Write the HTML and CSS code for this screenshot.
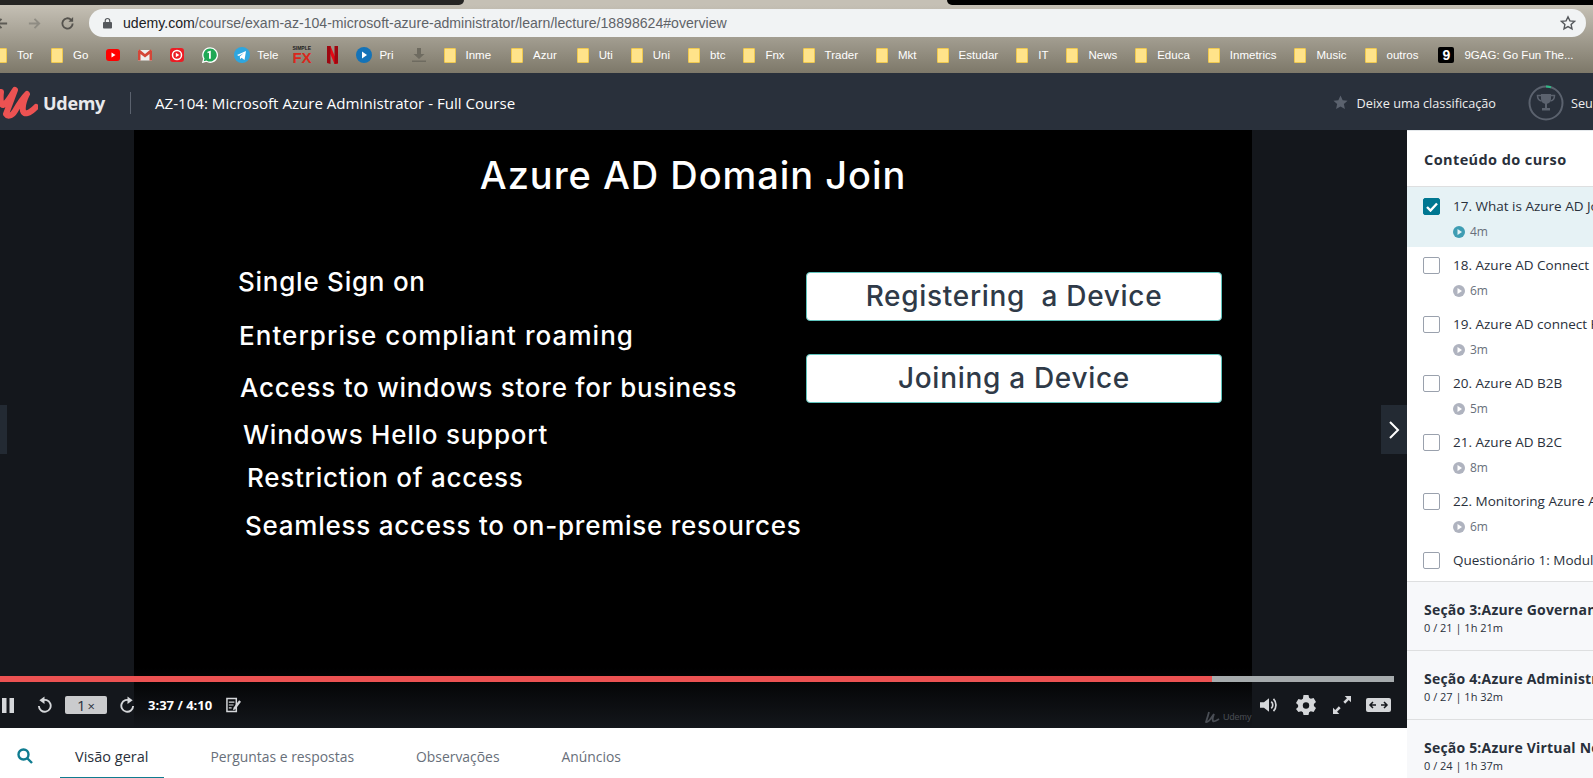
FILE: index.html
```html
<!DOCTYPE html>
<html lang="pt-BR">
<head>
<meta charset="utf-8">
<title>AZ-104: Microsoft Azure Administrator - Full Course | Udemy</title>
<link rel="stylesheet" href="styles.css">
</head>
<body>
<div class="tabstrip"><div class="tab-dark tab-left"></div><div class="tab-active"></div><div class="tab-dark tab-right"></div></div>
<div class="chrome">
  <div class="toolbar">
    <svg class="nav-ic back" viewBox="0 0 16 16"><path d="M14 8H3M8 3L3 8l5 5" fill="none" stroke="#5d5b55" stroke-width="2"/></svg>
    <svg class="nav-ic" viewBox="0 0 16 16"><path d="M2 8h11M8 3l5 5-5 5" fill="none" stroke="#8f8c83" stroke-width="2"/></svg>
    <svg class="nav-ic" viewBox="0 0 16 16"><path d="M13.5 8A5.5 5.5 0 1 1 11.8 4" fill="none" stroke="#55534e" stroke-width="2"/><path d="M14 1v5H9z" fill="#55534e"/></svg>
    <div class="omnibox">
      <svg class="lock" viewBox="0 0 10 12"><path d="M2.5 5V3.500a2.500 2.500 0 0 1 5 0V5" fill="none" stroke="#55585c" stroke-width="1.300"/><rect y="5" width="10" height="7" rx="1" fill="#55585c"/></svg>
      <span class="url"><b>udemy.com</b>/course/exam-az-104-microsoft-azure-administrator/learn/lecture/18898624#overview</span>
      <svg class="bookmark-star" viewBox="0 0 16 16"><path d="M8 1.800l1.900 4.100 4.500.5-3.300 3 .9 4.400L8 11.600l-4 2.200.9-4.400-3.300-3 4.500-.5z" fill="none" stroke="#55585c" stroke-width="1.400"/></svg>
    </div>
  </div>
  <div class="bookmarks">
    <a class="bm"><i class="folder"></i>Tor</a>
    <a class="bm"><i class="folder"></i>Go</a>
    <a class="bm"><svg class="fav" viewBox="0 0 14 14"><rect y="1" width="14" height="12" rx="3" fill="#f00"/><path d="M5.500 4.500v5L9.500 7z" fill="#fff"/></svg></a>
    <a class="bm"><svg class="fav" viewBox="0 0 14 14"><rect y="2" width="14" height="10.500" fill="#eee"/><path d="M0 2.500v10h2.500V6L7 9.500 11.500 6v6.500H14v-10L12.500 1.500 7 6 1.500 1.500z" fill="#d44638"/></svg></a>
    <a class="bm"><svg class="fav" viewBox="0 0 14 14"><rect width="14" height="14" rx="3" fill="#ec1c24"/><circle cx="7" cy="7" r="4.500" fill="none" stroke="#fff" stroke-width="1.500"/><path d="M5.800 4.800v4.400L9.300 7z" fill="#fff"/></svg></a>
    <a class="bm"><svg class="fav wide" viewBox="0 0 16 16"><path d="M8 .8a7.200 7.200 0 0 0-6.200 10.800L.8 15.200l3.700-1A7.200 7.200 0 1 0 8 .8z" fill="#1fa855" stroke="#fff" stroke-width="1.300"/><path d="M8.800 3.800v8H7V5.700l-1.500.6V4.800l3-1z" fill="#fff"/></svg></a>
    <a class="bm tele"><svg class="fav wide" viewBox="0 0 16 16"><circle cx="8" cy="8" r="8" fill="#2ea6df"/><path d="M3 8l9-4-1.500 9-3-2.300-1.400 1.500-.3-2.700 4-3.500-5 3z" fill="#fff"/></svg>Tele</a>
    <a class="bm fx-item"><span class="fx"><small>SIMPLE</small>FX</span></a>
    <a class="bm"><svg class="fav narrow" viewBox="0 0 11 18"><path d="M0 0h3.500L11 18H7.500z" fill="#e50914"/><path d="M0 0h3.500v18L0 17zM7.500 0H11v17l-3.500 1z" fill="#9d0710"/></svg></a>
    <a class="bm prime"><svg class="fav wide" viewBox="0 0 16 16"><circle cx="8" cy="8" r="8" fill="#1473b8"/><path d="M6 4.500v7L11 8z" fill="#fff"/></svg>Pri</a>
    <a class="bm"><svg class="fav" viewBox="0 0 14 14"><path d="M5 0h4v6h3.500L7 11 1.500 6H5z" fill="#6e6b60"/><rect y="12.500" width="14" height="1.500" fill="#6e6b60"/></svg></a>
    <a class="bm"><i class="folder"></i>Inme</a>
    <a class="bm nudge"><i class="folder"></i>Azur</a>
    <a class="bm nudge"><i class="folder"></i>Uti</a>
    <a class="bm"><i class="folder"></i>Uni</a>
    <a class="bm"><i class="folder"></i>btc</a>
    <a class="bm"><i class="folder"></i>Fnx</a>
    <a class="bm"><i class="folder"></i>Trader</a>
    <a class="bm"><i class="folder"></i>Mkt</a>
    <a class="bm nudge"><i class="folder"></i>Estudar</a>
    <a class="bm"><i class="folder"></i>IT</a>
    <a class="bm"><i class="folder"></i>News</a>
    <a class="bm"><i class="folder"></i>Educa</a>
    <a class="bm"><i class="folder"></i>Inmetrics</a>
    <a class="bm"><i class="folder"></i>Music</a>
    <a class="bm"><i class="folder"></i>outros</a>
    <a class="bm nudge"><span class="nine">9</span>9GAG: Go Fun The...</a>
  </div>
</div>

<header class="topbar">
  <svg class="logo" viewBox="0 0 38 34"><path d="M1 6C0 14 1 19 3 19 7 18 11 10 15 4 12 12 9 20 6 28 8 31 12 30 15 25 19 18 23 12 27 8 24 14 22 20 23 25 24 29 29 28 36 21" fill="none" stroke="#ec5252" stroke-width="6" stroke-linecap="round" stroke-linejoin="round"/></svg>
  <span class="brand">Udemy</span>
  <span class="sep"></span>
  <span class="course">AZ-104: Microsoft Azure Administrator - Full Course</span>
  <span class="rate"><svg viewBox="0 0 16 16"><path d="M8 .5l2.300 5 5.200.6-3.900 3.600 1.100 5.300L8 12.300 3.300 15l1.100-5.300L.5 6.100l5.200-.6z" fill="#5b626e"/></svg>Deixe uma classificação</span>
  <svg class="ring" viewBox="0 0 36 36"><circle cx="18" cy="18" r="16.500" fill="none" stroke="#5b626e" stroke-width="2"/><path d="M18 1.500a16.500 16.500 0 0 1 5 .8" fill="none" stroke="#2fb886" stroke-width="2"/><path d="M13 9h10v5a5 5 0 0 1-10 0z" fill="#5b626e"/><path d="M13 10.500H9.500c0 3.500 1.200 5 4 5.500M23 10.500h3.500c0 3.500-1.200 5-4 5.500" fill="none" stroke="#5b626e" stroke-width="1.500"/><path d="M17 18h2v5h3v2.500h-8V23h3z" fill="#5b626e"/></svg>
  <span class="progress-label">Seu progresso</span>
</header>

<div class="main">
  <div class="content">
    <div class="video">
      <div class="slide">
        <h1 class="slide-title">Azure AD Domain Join</h1>
        <div class="slide-body">
          <ul class="points">
            <li class="p1">Single Sign on</li>
            <li class="p2">Enterprise compliant roaming</li>
            <li class="p3">Access to windows store for business</li>
            <li class="p4">Windows Hello support</li>
            <li class="p5">Restriction of access</li>
            <li class="p6">Seamless access to on-premise resources</li>
          </ul>
          <div class="boxes">
            <div class="box">Registering&nbsp; a Device</div>
            <div class="box">Joining a Device</div>
          </div>
        </div>
      </div>
      <div class="side-nav side-prev"></div>
      <div class="side-nav side-next"><svg viewBox="0 0 12 20"><path d="M2 2l8 8-8 8" fill="none" stroke="#fff" stroke-width="2"/></svg></div>
      <div class="controls">
        <div class="bar"><div class="bar-done"></div></div>
        <div class="ctl-row">
          <svg class="ic pause" viewBox="0 0 12 15"><path d="M0 0h4.500v15H0zM7.500 0H12v15H7.500z" fill="#d5d7da"/></svg>
          <svg class="ic rew" viewBox="0 0 16 18"><path d="M5 4.500A6.300 6.300 0 1 1 2 10" fill="none" stroke="#d5d7da" stroke-width="2"/><path d="M8 0v8L2.500 4z" fill="#d5d7da"/></svg>
          <span class="speed">1<small>×</small></span>
          <svg class="ic fwd" viewBox="0 0 16 18"><path d="M11 4.500A6.300 6.300 0 1 0 14 10" fill="none" stroke="#d5d7da" stroke-width="2"/><path d="M8 0v8l5.500-4z" fill="#d5d7da"/></svg>
          <span class="time">3:37 / 4:10</span>
          <svg class="ic note" viewBox="0 0 16 16"><path d="M1 1h10v14H1z" fill="none" stroke="#d5d7da" stroke-width="1.600"/><path d="M3 5h6M3 8h5M3 11h3" stroke="#d5d7da" stroke-width="1.300"/><path d="M14 3l2 1.500-6 8-2.500 1 .5-2.500z" fill="#d5d7da"/></svg>
          <span class="ctl-right">
            <svg class="ic" viewBox="0 0 16 16"><path d="M0 5.500h3.500L8 2v12l-4.500-3.500H0z" fill="#d5d7da"/><path d="M10 5a4 4 0 0 1 0 6M12 2.500a8 8 0 0 1 0 11" fill="none" stroke="#d5d7da" stroke-width="1.500"/></svg>
            <svg class="ic gear" viewBox="0 0 20 20"><path d="M7.500 0h5l.6 2.800 1.700 1 2.800-.9 2.400 4.200-2.100 1.900v2l2.100 1.900-2.400 4.200-2.800-.9-1.700 1-.6 2.800h-5l-.6-2.800-1.700-1-2.800.9L0 13.900 2.100 12v-2L0 8.100l2.400-4.200 2.800.9 1.700-1z" fill="#d5d7da"/><circle cx="10" cy="10.500" r="3.200" fill="#14171c"/></svg>
            <svg class="ic" viewBox="0 0 20 20"><path d="M13 0h7v7l-2.500-2.500-4 4-2-2 4-4zM0 20v-7l2.500 2.500 4-4 2 2-4 4L7 20z" fill="#d5d7da"/></svg>
            <svg class="ic wide-ic" viewBox="0 0 25 14"><rect width="25" height="14" rx="2" fill="#d5d7da"/><path d="M10 7H4M7 4L4 7l3 3M15 7h6M18 4l3 3-3 3" fill="none" stroke="#14171c" stroke-width="1.500"/></svg>
          </span>
        </div>
        <div class="watermark"><svg viewBox="0 0 16 12"><path d="M5 1C4 5 3 8 2 11 5 12 7 7 10 3 9 6 8 8 9 10 10 11 12 10 15 8" fill="none" stroke="#4a4e55" stroke-width="1.800"/></svg>Udemy</div>
      </div>
    </div>
    <nav class="tabs">
      <svg class="search" viewBox="0 0 16 16"><circle cx="6.500" cy="6.500" r="5" fill="none" stroke="#0f7c90" stroke-width="2.400"/><path d="M10 10l5 5" stroke="#0f7c90" stroke-width="2.400"/></svg>
      <a class="tab on">Visão geral</a>
      <a class="tab">Perguntas e respostas</a>
      <a class="tab">Observações</a>
      <a class="tab">Anúncios</a>
    </nav>
  </div>

  <aside class="sidebar">
    <div class="side-head">Conteúdo do curso</div>
    <div class="lesson current">
      <span class="check checked"><svg viewBox="0 0 12 10"><path d="M1 5l3.500 3.500L11 1.500" fill="none" stroke="#fff" stroke-width="2.400"/></svg></span>
      <div><div class="l-title">17. What is Azure AD Join?</div><div class="l-meta"><svg viewBox="0 0 12 12"><circle cx="6" cy="6" r="6" fill="#3f9db3"/><path d="M4.500 3v6L9 6z" fill="#e6f2f5"/></svg>4m</div></div>
    </div>
    <div class="lesson">
      <span class="check"></span>
      <div><div class="l-title">18. Azure AD Connect</div><div class="l-meta"><svg viewBox="0 0 12 12"><circle cx="6" cy="6" r="6" fill="#afb3bf"/><path d="M4.500 3v6L9 6z" fill="#fff"/></svg>6m</div></div>
    </div>
    <div class="lesson">
      <span class="check"></span>
      <div><div class="l-title">19. Azure AD connect Health</div><div class="l-meta"><svg viewBox="0 0 12 12"><circle cx="6" cy="6" r="6" fill="#afb3bf"/><path d="M4.500 3v6L9 6z" fill="#fff"/></svg>3m</div></div>
    </div>
    <div class="lesson">
      <span class="check"></span>
      <div><div class="l-title">20. Azure AD B2B</div><div class="l-meta"><svg viewBox="0 0 12 12"><circle cx="6" cy="6" r="6" fill="#afb3bf"/><path d="M4.500 3v6L9 6z" fill="#fff"/></svg>5m</div></div>
    </div>
    <div class="lesson">
      <span class="check"></span>
      <div><div class="l-title">21. Azure AD B2C</div><div class="l-meta"><svg viewBox="0 0 12 12"><circle cx="6" cy="6" r="6" fill="#afb3bf"/><path d="M4.500 3v6L9 6z" fill="#fff"/></svg>8m</div></div>
    </div>
    <div class="lesson">
      <span class="check"></span>
      <div><div class="l-title">22. Monitoring Azure AD</div><div class="l-meta"><svg viewBox="0 0 12 12"><circle cx="6" cy="6" r="6" fill="#afb3bf"/><path d="M4.500 3v6L9 6z" fill="#fff"/></svg>6m</div></div>
    </div>
    <div class="lesson quiz">
      <span class="check"></span>
      <div><div class="l-title">Questionário 1: Modulo 2</div></div>
    </div>
    <div class="section"><div class="s-title">Seção 3:Azure Governance</div><div class="s-meta">0 / 21 | 1h 21m</div></div>
    <div class="section"><div class="s-title">Seção 4:Azure Administration</div><div class="s-meta">0 / 27 | 1h 32m</div></div>
    <div class="section"><div class="s-title">Seção 5:Azure Virtual Networking</div><div class="s-meta">0 / 24 | 1h 37m</div></div>
  </aside>
</div>
</body>
</html>
```

FILE: styles.css
```css
html,body{margin:0; padding:0; height:778px; overflow:hidden; background:#fff;}
body{font-family:"Open Sans","Liberation Sans",sans-serif; color:#29303b; width:1593px;}
svg{display:block; flex:none;}

/* browser chrome */
.tabstrip{display:flex; height:5px; background:#c5c0b5;}
.tab-dark{background:#111;}
.tab-left{width:464px; border-radius:0 0 6px 0; background:#262524;}
.tab-active{width:483px;}
.tab-right{flex:1; background:#000; border-radius:0 0 0 6px;}
.chrome{height:68px; background:linear-gradient(#c5c0b5,#7d7869);}
.toolbar{height:32px; padding-top:4px; box-sizing:border-box; display:flex; align-items:flex-start; }
.nav-ic{width:15px; height:15px; margin:7px 0 0 18px;}
.nav-ic.back{margin-left:-6px;}
.omnibox{flex:1; height:28px; margin-left:14px; margin-right:7px; background:#f1f3f4; border-radius:14px; display:flex; align-items:center; padding-left:14px; font-family:"Liberation Sans",sans-serif; font-size:14.1px; color:#5f6368;}
.lock{width:9px; height:12px; margin-right:11px;}
.url b{font-weight:normal; color:#202124;}
.bookmark-star{width:16px; height:16px; margin-left:auto; margin-right:10px;}
.bookmarks{height:36px; display:flex; align-items:center; gap:18px; margin-left:-5px; white-space:nowrap; font-family:"Liberation Sans",sans-serif; font-size:11.5px; color:#fff;}
.bm{display:flex; align-items:center; gap:10px;}
.bm.tele{margin-left:-2px; gap:7px;}
.bm.prime{gap:7px;}
.bm.nudge{margin-left:2px;}
.fx-item{margin-left:-4px;}
.folder{display:block; width:12px; height:15px; background:#ffe38a; border:1px solid #f0c94f; box-sizing:border-box; border-radius:1px;}
.fav{width:14px; height:14px;}
.fav.wide{width:16px; height:16px;}
.fav.narrow{width:11px; height:18px;}
.fx{display:block; width:17px; color:#d9281c; font-family:"Liberation Sans",sans-serif; font-weight:bold; font-size:15px; line-height:13px; text-align:center;}
.fx small{display:block; color:#222; font-size:5px; line-height:5px;}
.nine{display:block; width:16px; height:16px; background:#000; color:#fff; border-radius:2px; font-weight:bold; font-size:14px; line-height:16px; text-align:center;}

/* course header */
.topbar{height:57px; padding-top:2px; background:#29303b; display:flex; align-items:center; color:#fff; white-space:nowrap; overflow:hidden; box-sizing:border-box;}
.logo{width:38px; height:34px; margin-top:1px;}
.brand{margin-left:5px; font-weight:bold; font-size:18px; color:#e8e9eb; letter-spacing:-.3px;}
.sep{width:1px; height:22px; background:#5b626e; margin-left:25px;}
.course{margin-left:24px; font-size:15.1px;}
.rate{margin-left:auto; display:flex; align-items:center; gap:9px; font-size:12.7px; color:#eee;}
.rate svg{width:15px; height:15px;}
.ring{width:36px; height:36px; margin-left:32px;}
.progress-label{margin-left:7px; width:22px; font-size:12.7px; overflow:hidden; color:#eee;}

/* player */
.main{display:flex; height:648px;}
.content{width:1407px; flex:none;}
.video{position:relative; height:598px; background:#14171c; overflow:hidden;}
.slide{width:1118px; height:598px; margin-left:134px; background:#000; color:#fff; font-family:Inter,"Liberation Sans",sans-serif;}
.slide-title{margin:0; padding-top:21px; text-align:center; font-size:38px; line-height:48px; font-weight:500; letter-spacing:.95px;}
.slide-body{display:flex; justify-content:space-between; margin-top:67px; padding-left:104px; padding-right:30px;}
.points{list-style:none; margin:0; padding:0; font-size:26px; line-height:32px; font-weight:500; letter-spacing:.75px; white-space:nowrap;}
.p2{margin:22px 0 0 1px; letter-spacing:1.05px;}
.p3{margin:20px 0 0 2px;}
.p4{margin:15px 0 0 5px;}
.p5{margin:11px 0 0 9px;}
.p6{margin:16px 0 0 7px;}
.boxes{width:416px; padding-top:6px;}
.box{height:49px; margin-bottom:33px; box-sizing:border-box; background:#fff; border:1px solid #5fc4bd; border-radius:4px; color:#2f3a48; text-align:center; font-size:28px; line-height:46px; font-weight:500; letter-spacing:.7px;}
.side-nav{position:absolute; top:275px; height:49px; background:#232a33;}
.side-prev{left:0; width:7px;}
.side-next{right:0; width:26px; display:flex; align-items:center; justify-content:center;}
.side-next svg{width:12px; height:20px;}
.controls{position:absolute; left:0; right:0; bottom:0; height:60px; background:linear-gradient(rgba(20,23,28,0),#14171c);}
.bar{position:absolute; top:8px; left:0; width:1394px; height:6px; background:#a6abad;}
.bar-done{width:1212px; height:6px; background:#ec5252;}
.ctl-row{position:absolute; top:27px; left:0; right:0; height:20px; display:flex; align-items:center;}
.ic{height:18px; width:18px;}
.pause{width:12px; height:15px; margin-left:2px;}
.rew{width:15px; margin-left:23px;}
.speed{width:42px; height:18px; margin-left:13px; background:#cacbcd; border-radius:2px; color:#29303b; font-size:15px; line-height:18px; text-align:center;}
.speed small{font-size:13px; margin-left:2px;}
.fwd{width:15px; margin-left:13px;}
.time{margin-left:13px; color:#fff; font-size:13px; font-weight:bold;}
.note{width:15px; height:16px; margin-left:14px;}
.ctl-right{position:absolute; left:1260px; display:flex; align-items:center; gap:18px;}
.gear{width:20px; height:20px; margin-right:-1px;}
.wide-ic{width:25px; height:14px; margin-left:-3px;}
.watermark{position:absolute; left:1204px; top:43px; display:flex; align-items:center; gap:3px; color:#4a4e55; font-size:9px; font-family:"Liberation Sans",sans-serif;}
.watermark svg{width:16px; height:12px;}

/* tabs under video */
.tabs{height:50px; display:flex; align-items:stretch; font-size:13.9px; color:#686f7a; white-space:nowrap;}
.search{width:16px; height:16px; margin:20px 27px 0 17px;}
.tab{display:block; padding:0 15px; line-height:58px; margin-right:32px; box-sizing:border-box; height:50px;}
.tab.on{color:#29303b; border-bottom:1px solid #0f7c90; padding-right:16px; margin-right:31px; font-size:14.5px;}

/* course content sidebar */
.sidebar{flex:1; overflow:hidden; background:#fff; white-space:nowrap; border-top:1px solid #e4e8eb;}
.side-head{height:55px; padding-left:17px; line-height:58px; font-weight:bold; font-size:14.5px; border-bottom:1px solid #dedfe0; background:#fff; letter-spacing:.4px;}
.lesson{display:flex; gap:13px; height:59px; padding:10px 0 0 16px; box-sizing:border-box; overflow:hidden;}
.lesson.current{height:60px; padding-top:11px; background:#e6f2f5;}
.lesson.quiz{height:40px; border-bottom:1px solid #dedfe0;}
.check{display:flex; align-items:center; justify-content:center; width:17px; height:17px; box-sizing:border-box; flex:none; background:#fff; border:1px solid #9aa1ad; border-radius:2px;}
.check.checked{background:#007791; border-color:#007791;}
.check svg{width:12px; height:10px;}
.l-title{font-size:13.5px; line-height:17px; color:#29303b;}
.l-meta{display:flex; align-items:center; gap:5px; margin-top:9px; font-size:12px; color:#686f7a; line-height:16px;}
.l-meta svg{width:12px; height:12px;}
.section{height:69px; box-sizing:border-box; padding:18px 0 0 17px; background:#f7f8fa; border-bottom:1px solid #dedfe0;}
.s-title{font-weight:bold; font-size:14px; line-height:20px; letter-spacing:.2px;}
.s-meta{font-size:11px; line-height:16px; color:#29303b;}
```
